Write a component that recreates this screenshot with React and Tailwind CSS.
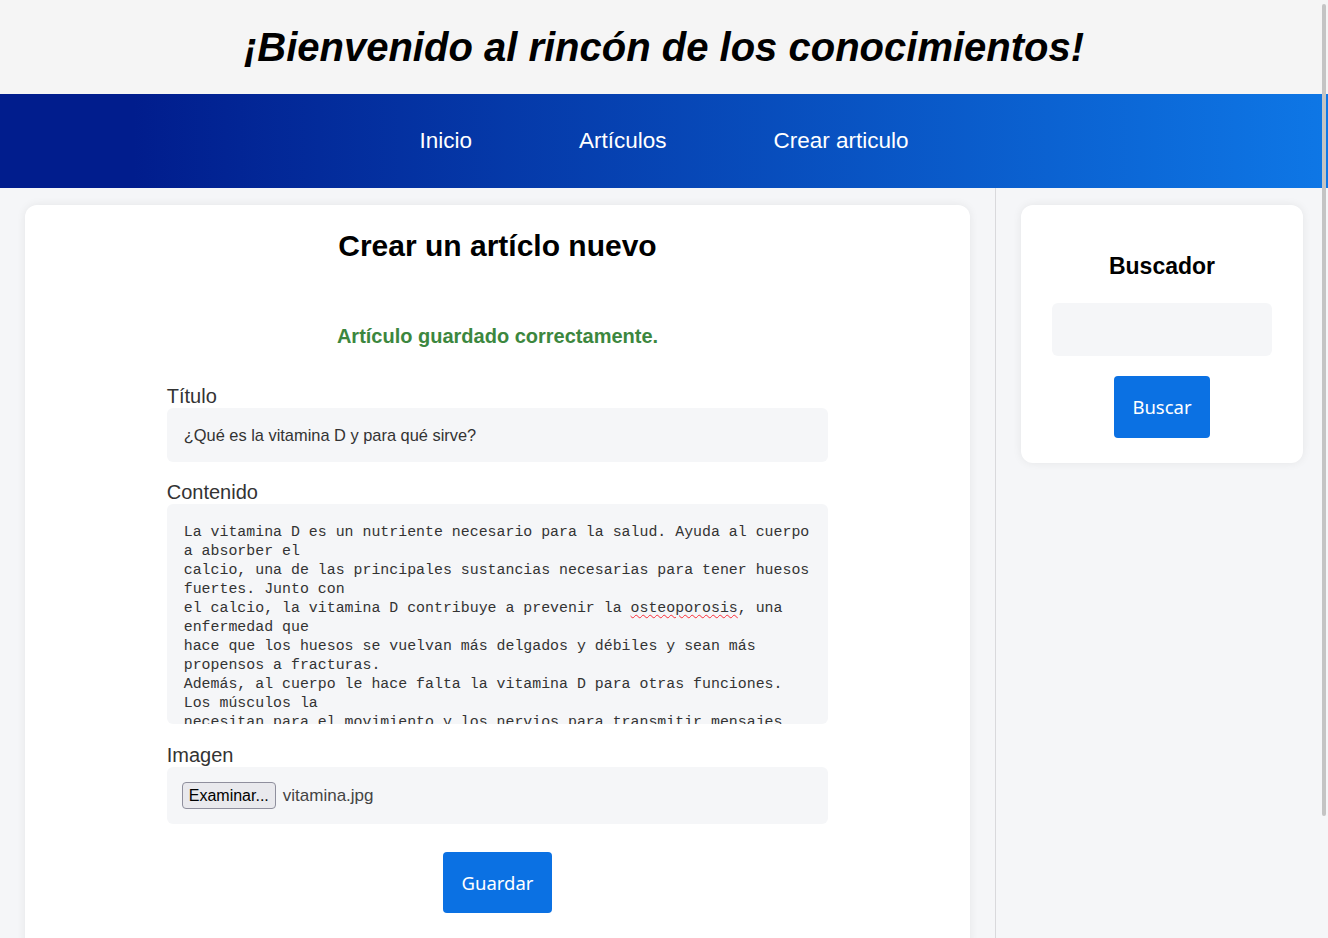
import { useState } from 'react'

const lines = [
    'La vitamina D es un nutriente necesario para la salud. Ayuda al cuerpo',
    'a absorber el',
    'calcio, una de las principales sustancias necesarias para tener huesos',
    'fuertes. Junto con',
    null,
    'enfermedad que',
    'hace que los huesos se vuelvan más delgados y débiles y sean más',
    'propensos a fracturas.',
    'Además, al cuerpo le hace falta la vitamina D para otras funciones.',
    'Los músculos la',
    'necesitan para el movimiento y los nervios para transmitir mensajes',
]

function Header() {
    return (
        <header className="bg-[#f5f5f5] h-[94px] flex items-center justify-center">
            <h1 className="text-[40px] font-bold italic text-black leading-none">
                ¡Bienvenido al rincón de los conocimientos!
            </h1>
        </header>
    )
}

function Nav() {
    const links = ['Inicio', 'Artículos', 'Crear articulo']
    return (
        <nav className="h-[94px] bg-linear-to-r/srgb from-[#011d8d] from-10% to-[#0e77e6] flex items-center justify-center gap-[107px]">
            {links.map((l) => (
                <a key={l} href="#" className="text-white text-[22.5px] leading-none">
                    {l}
                </a>
            ))}
        </nav>
    )
}

function Label({ children }) {
    return <label className="block text-[20px] leading-[23px] text-[#333]">{children}</label>
}

function ArticleForm() {
    const [title, setTitle] = useState('¿Qué es la vitamina D y para qué sirve?')

    return (
        <div className="bg-white rounded-xl shadow-[0_0_10px_rgba(0,0,0,0.07)] pt-[24px] pb-[40px]">
            <h2 className="text-center text-[30px] leading-[34px] font-bold text-black">Crear un artíclo nuevo</h2>
            <p className="text-center text-[20px] leading-[23px] font-bold text-[#3c873e] mt-[62px]">
                Artículo guardado correctamente.
            </p>

            <form className="w-[70%] mx-auto mt-[37px]" onSubmit={(e) => e.preventDefault()}>
                <Label>Título</Label>
                <input
                    value={title}
                    onChange={(e) => setTitle(e.target.value)}
                    className="block w-full h-[54px] bg-[#f5f6f8] rounded-md px-[17px] text-[16.4px] text-[#333] outline-none"
                />

                <div className="mt-[19px]">
                    <Label>Contenido</Label>
                    <div className="h-[220px] bg-[#f5f6f8] rounded-md px-[17px] pt-[19px] overflow-hidden font-['Liberation_Mono',monospace] text-[14.9px] leading-[19px] text-[#333] whitespace-pre">
                        {lines.map((line, i) =>
                            line === null ? (
                                <div key={i}>
                                    el calcio, la vitamina D contribuye a prevenir la{' '}
                                    <span className="underline decoration-wavy decoration-red-500 decoration-1 underline-offset-2">osteoporosis</span>, una
                                </div>
                            ) : (
                                <div key={i}>{line}</div>
                            )
                        )}
                    </div>
                </div>

                <div className="mt-[20px]">
                    <Label>Imagen</Label>
                    <div className="h-[57px] bg-[#f5f6f8] rounded-md px-[15px] flex items-center gap-[7px]">
                        <span className="h-[27px] px-[6px] flex items-center bg-[#e9e9ed] border border-[#8f8f9d] rounded-[4px] text-[16px] text-black">
                            Examinar...
                        </span>
                        <span className="text-[17px] text-[#444]">vitamina.jpg</span>
                    </div>
                </div>

                <div className="flex justify-center mt-[28px]">
                    <button className="w-[109px] h-[61px] bg-[#0b71e3] rounded-[4px] text-white text-[18.5px] font-['Noto_Sans',sans-serif]">
                        Guardar
                    </button>
                </div>
            </form>
        </div>
    )
}

function Sidebar() {
    return (
        <aside className="w-[332px] shrink-0 px-[25px] pt-[17px]">
            <div className="bg-white rounded-xl shadow-[0_0_10px_rgba(0,0,0,0.07)] pt-[48px] pb-[25px] px-[31px] flex flex-col items-center">
                <h3 className="text-[23px] leading-[26px] font-bold text-black">Buscador</h3>
                <input className="mt-[24px] w-full h-[53px] bg-[#f5f6f8] rounded-md px-[12px] outline-none" />
                <button className="mt-[20px] w-[96px] h-[62px] bg-[#0b71e3] rounded-[4px] text-white text-[18.5px] font-['Noto_Sans',sans-serif]">
                    Buscar
                </button>
            </div>
        </aside>
    )
}

export default function App() {
    return (
        <div className="h-screen overflow-hidden bg-[#f5f6f8] font-['Liberation_Sans',Arial,sans-serif] relative">
            <Header />
            <Nav />
            <div className="flex">
                <main className="flex-1 border-r border-[#d9d9dc] px-[25px] pt-[17px] min-h-[750px]">
                    <ArticleForm />
                </main>
                <Sidebar />
            </div>

            {/* overlay scrollbar */}
            <div className="absolute right-[2px] top-[4px] w-[4px] h-[812px] rounded-full bg-[#c4c4c4]"></div>
        </div>
    )
}
